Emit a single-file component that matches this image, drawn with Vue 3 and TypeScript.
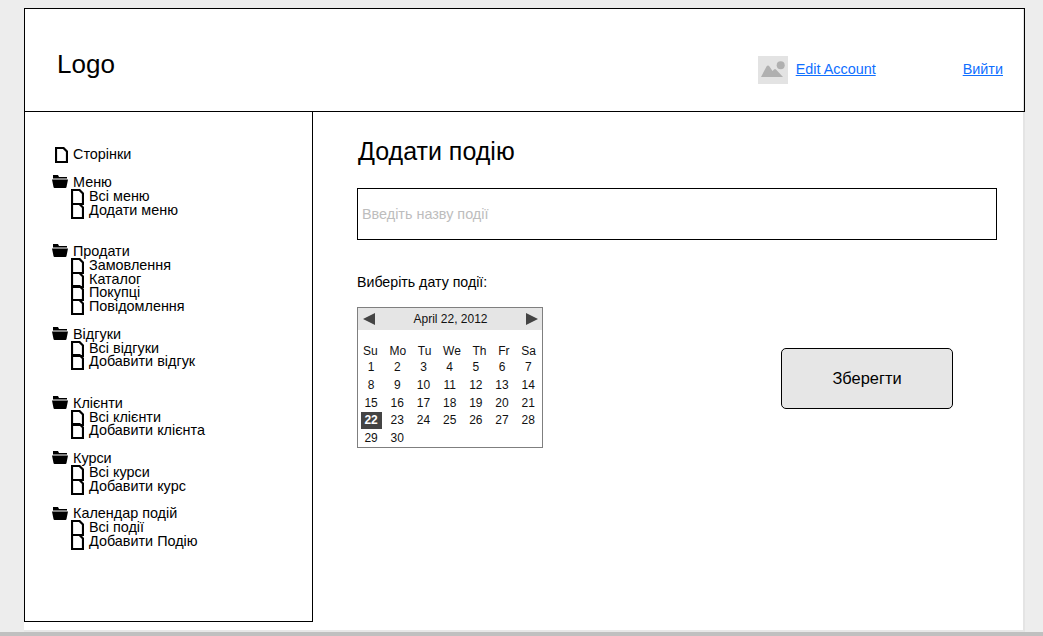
<script setup lang="ts">
interface MenuGroup {
  title: string
  items: string[]
  wide: boolean
}

const groups: MenuGroup[] = [
  { title: 'Меню', items: ['Всі меню', 'Додати меню'], wide: true },
  { title: 'Продати', items: ['Замовлення', 'Каталог', 'Покупці', 'Повідомлення'], wide: false },
  { title: 'Відгуки', items: ['Всі відгуки', 'Добавити відгук'], wide: true },
  { title: 'Клієнти', items: ['Всі клієнти', 'Добавити клієнта'], wide: false },
  { title: 'Курси', items: ['Всі курси', 'Добавити курс'], wide: false },
  { title: 'Календар подій', items: ['Всі події', 'Добавити Подію'], wide: false }
]

const weekDays = ['Su', 'Mo', 'Tu', 'We', 'Th', 'Fr', 'Sa']
const days = Array.from({ length: 30 }, (_, i) => i + 1)
const selectedDay = 22
</script>

<template>
  <div class="viewport">
    <div class="page">
      <header class="top">
        <div class="logo">Logo</div>
        <nav class="account">
          <span class="avatar">
            <svg width="30" height="28" viewBox="0 0 30 28">
              <circle cx="22.7" cy="9.3" r="4" fill="#b0b0b0" />
              <path d="M3 21 L8.5 10.5 Q10 8.5 11.5 10.5 L14.5 15 L16 13.5 Q17 12.5 18 13.5 L25 21 Z" fill="#b0b0b0" />
            </svg>
          </span>
          <a class="link edit" href="#">Edit Account</a>
          <a class="link" href="#">Вийти</a>
        </nav>
      </header>

      <div class="body">
        <aside class="side">
          <div class="row home">
            <span class="slot">
              <svg class="file" width="13" height="16" viewBox="0 0 13 16">
                <path d="M1 1 H8.5 L12 4.5 V15 H1 Z" fill="none" stroke="#000" stroke-width="2.2" />
              </svg>
            </span>
            <span>Сторінки</span>
          </div>

          <div v-for="group in groups" :key="group.title" class="group" :class="{ wide: group.wide }">
            <div class="row">
              <span class="slot">
                <svg width="16" height="13" viewBox="0 0 16 13">
                  <path d="M1 0 H6 L7 2 H15 V3.5 H1 Z M0 4.5 H16 L14.5 12 Q14.3 13 13.5 13 H2.5 Q1.7 13 1.5 12 Z" fill="#000" />
                </svg>
              </span>
              <span>{{ group.title }}</span>
            </div>
            <div v-for="item in group.items" :key="item" class="row sub">
              <svg class="file" width="13" height="16" viewBox="0 0 13 16">
                <path d="M1 1 H8.5 L12 4.5 V15 H1 Z" fill="none" stroke="#000" stroke-width="2.2" />
              </svg>
              <span>{{ item }}</span>
            </div>
          </div>
        </aside>

        <main class="content">
          <h1 class="title">Додати подію</h1>
          <input class="name" type="text" placeholder="Введіть назву події" />
          <p class="date-label">Виберіть дату події:</p>

          <div class="lower">
            <div class="calendar">
              <div class="cal-head">
                <svg width="12" height="12" viewBox="0 0 12 12"><path d="M0 6 L12 0 V12 Z" fill="#444" /></svg>
                <span>April 22, 2012</span>
                <svg width="12" height="12" viewBox="0 0 12 12"><path d="M12 6 L0 0 V12 Z" fill="#444" /></svg>
              </div>
              <div class="week">
                <span v-for="d in weekDays" :key="d">{{ d }}</span>
              </div>
              <div class="days">
                <span v-for="d in days" :key="d" class="day" :class="{ selected: d === selectedDay }">{{ d }}</span>
              </div>
            </div>
            <button class="save" type="button">Зберегти</button>
          </div>
        </main>
      </div>
    </div>
    <div class="strip"></div>
  </div>
</template>

<style>
body {
  background: #ededed;
}
</style>

<style scoped>
.viewport {
  display: flex;
  flex-direction: column;
  height: 636px;
  overflow: hidden;
  font-family: "Liberation Sans", Arial, sans-serif;
  color: #000;
}

.page {
  flex: 1;
  box-sizing: border-box;
  width: 1001px;
  margin: 8px 0 0 24px;
  border-right: 2px solid #e4e4e4;
  border-bottom: 2px solid #e8e8e8;
  background: #fff;
}

.strip {
  height: 4px;
  background: #c0c0c0;
}

.top {
  display: flex;
  align-items: center;
  box-sizing: border-box;
  width: 1001px;
  height: 104px;
  padding: 8px 21px 0 32px;
  border: 1px solid #000;
}

.logo {
  font-size: 26px;
}

.account {
  display: flex;
  align-items: center;
  margin: 11px 0 0 auto;
  font-size: 14.4px;
}

.avatar {
  display: flex;
  width: 30px;
  height: 28px;
  margin-right: 8px;
  background: #e3e3e3;
}

.link {
  margin-top: -2px;
  color: #0f6fff;
}

.edit {
  margin-right: 87px;
}

.body {
  display: flex;
  margin-top: -1px;
}

.side {
  box-sizing: border-box;
  flex: none;
  width: 289px;
  height: 511px;
  padding: 35.3px 0 0 27px;
  border: 1px solid #000;
  font-size: 14.4px;
}

.row {
  display: flex;
  align-items: center;
  gap: 5px;
  height: 13.8px;
}

.row svg {
  flex: none;
}

.row .file {
  margin-top: 2px;
}

.slot {
  display: flex;
  justify-content: flex-end;
  flex: none;
  width: 16px;
}

.home {
  margin-bottom: 14px;
}

.sub {
  margin-left: 19px;
}

.group {
  margin-bottom: 13.8px;
}

.group.wide {
  margin-bottom: 27.6px;
}

.content {
  flex: 1;
  padding: 0 0 0 44px;
}

.title {
  margin: 26px 0 23px 1px;
  font-size: 25px;
  font-weight: 400;
  line-height: 28px;
}

.name {
  display: block;
  box-sizing: border-box;
  width: 640px;
  height: 52px;
  padding: 0 4px;
  border: 1px solid #000;
  outline: none;
  font: 14.4px "Liberation Sans", Arial, sans-serif;
}

.name::placeholder {
  color: #bdbdbd;
}

.date-label {
  margin: 34px 0 17px;
  font-size: 14.2px;
  line-height: 16px;
}

.lower {
  display: flex;
  align-items: flex-start;
}

.calendar {
  box-sizing: border-box;
  flex: none;
  width: 186px;
  height: 141px;
  border: 1px solid #7f7f7f;
  font-size: 12px;
  color: #111;
}

.cal-head {
  display: flex;
  align-items: center;
  justify-content: space-between;
  height: 22px;
  padding: 0 4px 0 5px;
  background: #e5e5e5;
}

.week {
  display: flex;
  justify-content: space-between;
  margin-top: 13px;
  padding: 0 6px 0 5px;
  line-height: 16px;
}

.days {
  display: grid;
  grid-template-columns: repeat(7, 26.2px);
  grid-auto-rows: 17.75px;
  text-align: center;
}

.day {
  line-height: 17px;
}

.selected {
  width: 21px;
  height: 17px;
  margin: 0 auto;
  background: #444;
  color: #fff;
  font-weight: 700;
}

.save {
  box-sizing: border-box;
  flex: none;
  width: 172px;
  height: 61px;
  margin: 41px 0 0 238px;
  border: 1px solid #000;
  border-radius: 5px;
  background: #e6e6e6;
  color: #000;
  font: 16.4px "Liberation Sans", Arial, sans-serif;
}
</style>
